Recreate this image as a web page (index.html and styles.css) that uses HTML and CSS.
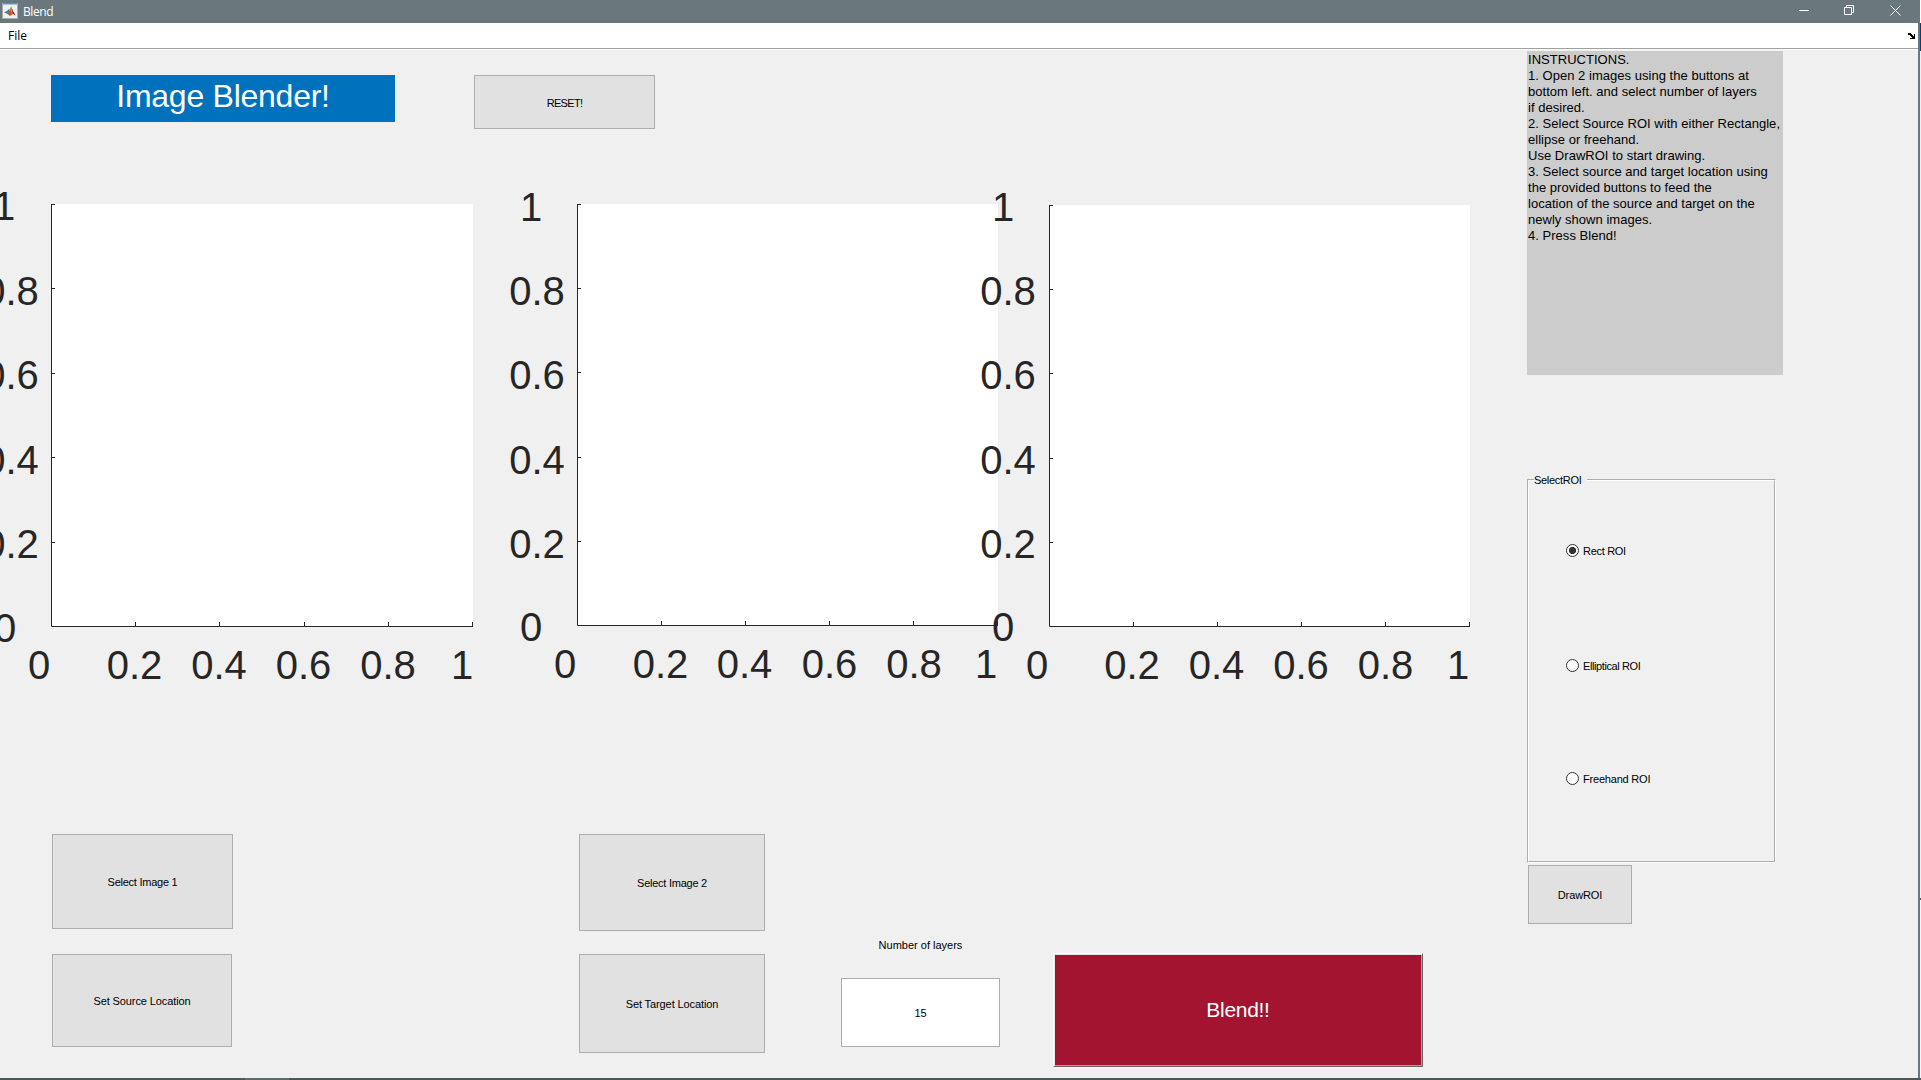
FILE: index.html
```html
<!DOCTYPE html>
<html lang="en">
<head>
<meta charset="utf-8">
<title>Blend</title>
<link rel="stylesheet" href="styles.css">
</head>
<body>
<div class="screen">
  <div class="window">
    <header class="titlebar">
      <svg class="app-icon" width="16" height="16" viewBox="0 0 16 16">
        <rect x="0.5" y="0.5" width="15" height="15" fill="#eef1f4" stroke="#a3adb1"/>
        <rect x="1" y="0" width="14" height="1.5" fill="#5b95bd"/>
        <path d="M2 9.2 5 8 7.6 5.5 7.5 9 5.5 11z" fill="#3b7ca8"/>
        <path d="M5.5 11 8 7 9 3.5 11 8 13.5 12.5 11 10.8 8 13z" fill="#c8502a"/>
        <path d="M8.6 6 9 3.5 10 7 9.4 11.5z" fill="#f08b2c"/>
        <path d="M9.3 3.8 10.8 8 13.5 12.5 11.2 10.8z" fill="#8d2318"/>
      </svg>
      <span class="window-title">Blend</span>
      <svg class="caption minimize" width="10" height="11"><path d="M0 5.5H10" stroke="#fff" fill="none"/></svg>
      <svg class="caption restore" width="10" height="11"><path d="M.5 2.5H7.5V9.5H.5ZM2.5 2.5V.5H9.5V7.5H7.5" stroke="#fff" fill="none"/></svg>
      <svg class="caption close" width="11" height="11"><path d="M.5.5 10.5 10.5M10.5.5.5 10.5" stroke="#fff" fill="none"/></svg>
    </header>
    <nav class="menubar">
      <span class="menu">File</span>
      <svg class="dock" width="7" height="6" shape-rendering="crispEdges"><path d="M0 0H3V1H4V2H5V3H6V1H7V6H2V5H4V4H3V3H2V2H0Z" fill="#000"/></svg>
    </nav>

    <main class="figure">
      <section class="workspace">
        <div class="heading">
          <h1 class="banner"><span>Image Blender!</span></h1>
          <button class="btn reset">RESET!</button>
        </div>

        <div class="plots">
          <svg class="axes axes-source" width="422" height="423">
            <rect width="422" height="423" fill="#fff"/>
            <path class="rule" d="M.5 0V422.5H422M0 .5H4M0 84.5H4M0 169.5H4M0 253.5H4M0 338.5H4M84.5 422V418M168.5 422V418M253.5 422V418M337.5 422V418M421.5 422V418"/>
            <g class="ylab"><text x="-47" y="16">1</text><text x="-40" y="101">0.8</text><text x="-40" y="185">0.6</text><text x="-40" y="270">0.4</text><text x="-40" y="354">0.2</text><text x="-46" y="438">0</text></g>
            <g class="xlab"><text x="-12" y="475">0</text><text x="83.5" y="475">0.2</text><text x="168" y="475">0.4</text><text x="252.5" y="475">0.6</text><text x="337" y="475">0.8</text><text x="411" y="475">1</text></g>
          </svg>
          <svg class="axes axes-target" width="421" height="422">
            <rect width="421" height="422" fill="#fff"/>
            <path class="rule" d="M.5 0V421.5H421M0 .5H4M0 84.5H4M0 168.5H4M0 253.5H4M0 337.5H4M84.5 421V417M168.5 421V417M252.5 421V417M336.5 421V417M420.5 421V417"/>
            <g class="ylab"><text x="-46" y="17">1</text><text x="-40" y="101">0.8</text><text x="-40" y="185">0.6</text><text x="-40" y="270">0.4</text><text x="-40" y="354">0.2</text><text x="-46" y="437">0</text></g>
            <g class="xlab"><text x="-12" y="474">0</text><text x="83.5" y="474">0.2</text><text x="167.5" y="474">0.4</text><text x="252.5" y="474">0.6</text><text x="337" y="474">0.8</text><text x="409" y="474">1</text></g>
          </svg>
          <svg class="axes axes-result" width="421" height="422">
            <rect width="421" height="422" fill="#fff"/>
            <path class="rule" d="M.5 0V421.5H421M0 .5H4M0 84.5H4M0 168.5H4M0 253.5H4M0 337.5H4M84.5 421V417M168.5 421V417M252.5 421V417M336.5 421V417M420.5 421V417"/>
            <g class="ylab"><text x="-46" y="16">1</text><text x="-41" y="100">0.8</text><text x="-41" y="184">0.6</text><text x="-41" y="269">0.4</text><text x="-41" y="353">0.2</text><text x="-46" y="436">0</text></g>
            <g class="xlab"><text x="-12" y="474">0</text><text x="83" y="474">0.2</text><text x="167.5" y="474">0.4</text><text x="252" y="474">0.6</text><text x="336.5" y="474">0.8</text><text x="409" y="474">1</text></g>
          </svg>
        </div>

        <div class="controls">
          <div class="stack source">
            <button class="btn select-1">Select Image 1</button>
            <button class="btn locate-1">Set Source Location</button>
          </div>
          <div class="stack target">
            <button class="btn select-2">Select Image 2</button>
            <button class="btn locate-2">Set Target Location</button>
          </div>
          <div class="layers">
            <span class="layers-label">Number of layers</span>
            <div class="layers-value">15</div>
          </div>
          <button class="blend">Blend!!</button>
        </div>
      </section>

      <aside class="side">
        <div class="instructions">INSTRUCTIONS.<br>1. Open 2 images using the buttons at<br>bottom left. and select number of layers<br>if desired.<br>2. Select Source ROI with either Rectangle,<br>ellipse or freehand.<br>Use DrawROI to start drawing.<br>3. Select source and target location using<br>the provided buttons to feed the<br>location of the source and target on the<br>newly shown images.<br>4. Press Blend!</div>
        <div class="roi">
          <div class="roi-frame">
            <div class="roi-title"><span>SelectROI</span></div>
            <div class="option rect"><i class="radio on"></i><span>Rect ROI</span></div>
            <div class="option elliptical"><i class="radio"></i><span>Elliptical ROI</span></div>
            <div class="option freehand"><i class="radio"></i><span>Freehand ROI</span></div>
          </div>
        </div>
        <button class="btn draw">DrawROI</button>
      </aside>
    </main>
  </div>
  <footer class="taskbar"><i class="task"></i></footer>
</div>
</body>
</html>
```
FILE: styles.css
```css
* { box-sizing: border-box; }
body {
  margin: 0;
  width: 1921px;
  height: 1080px;
  overflow: hidden;
  /* sliver of the desktop behind the window */
  background: linear-gradient(#fff 23px, #003f78 23px 51px, #f0f0f0 51px 898px, #4b5759 898px 900px, #f6f6f6 900px);
  color: #000;
  font: 11px/13px "Liberation Sans", Arial, sans-serif;
}
.screen { display: flex; flex-direction: column; height: 1080px; }
.window {
  width: 1920px;
  height: 1078px;
  border-right: 2px solid #6a787d;
  display: flex;
  flex-direction: column;
  overflow: hidden;
}

/* Caption and menu */
.titlebar {
  flex: none;
  height: 23px;
  background: #6a787d;
  display: flex;
  align-items: flex-start;
  padding: 3px 17px 0 2px;
}
.window-title {
  margin: 1px auto 0 5px;
  color: #fff;
  font: 12px/16px "Open Sans", "Noto Sans", sans-serif;
  letter-spacing: -.4px;
}
.caption { margin-top: 2px; }
.minimize { margin-right: 35px; }
.restore { margin-right: 36px; }
.menubar {
  flex: none;
  height: 27px;
  background: #fff;
  box-shadow: inset 0 -1px #fcfcfc, inset 0 -2px #a0a0a0;
  display: flex;
  justify-content: space-between;
  padding: 5px 3px 0 8px;
}
.menu { font: 12px/16px "Open Sans", "Noto Sans", sans-serif; }
.dock { margin-top: 5px; }

/* Figure */
.figure {
  flex: 1;
  background: #f0f0f0;
  display: flex;
  overflow: hidden;
}
.workspace { width: 1527px; flex: none; }
.heading {
  height: 154px;
  padding: 25px 0 0 51px;
  display: flex;
  align-items: flex-start;
  gap: 79px;
}
.banner {
  margin: 0;
  width: 344px;
  height: 47px;
  background: #0072bd;
  color: #fff;
  font-weight: 400;
  font-size: 32px;
  line-height: 42px;
  letter-spacing: -.25px;
  text-align: center;
}
.btn {
  display: block;
  border: 1px solid #adadad;
  border-radius: 0;
  background: #e1e1e1;
  color: #000;
  font: inherit;
  letter-spacing: -.1px;
  padding: 2px 0 0;
}
.reset { width: 181px; height: 54px; letter-spacing: -.7px; }

.plots { display: flex; height: 630px; padding-left: 51px; }
.axes { overflow: visible; flex: none; }
.axes-target { margin-left: 104px; }
.axes-result { margin: 1px 0 0 51px; }
.axes text { font-size: 40px; fill: #262626; text-anchor: middle; }
.rule { fill: none; stroke: #262626; stroke-width: 1; }

.controls { display: flex; padding-left: 52px; align-items: flex-start; }
.stack { display: flex; flex-direction: column; }
.source { width: 527px; gap: 25px; }
.target { width: 262px; gap: 23px; }
.select-1 { width: 181px; height: 95px; letter-spacing: -.25px; }
.locate-1 { width: 180px; height: 93px; }
.select-2 { width: 186px; height: 97px; letter-spacing: -.25px; }
.locate-2 { width: 186px; height: 99px; }
.layers {
  width: 159px;
  margin: 105px 53px 0 0;
  display: flex;
  flex-direction: column;
  gap: 26px;
  text-align: center;
}
.layers-value {
  height: 69px;
  background: #fff;
  border: 1px solid #abadb3;
  line-height: 69px;
}
.blend {
  width: 370px;
  height: 114px;
  margin-top: 119px;
  padding: 0;
  border: 1px solid;
  border-color: #fff #696969 #696969 #fff;
  box-shadow: inset 1px 1px #e3e3e3, inset -1px -1px #a0a0a0;
  background: #a2142f;
  color: #fff;
  font: 21px/24px "Liberation Sans", Arial, sans-serif;
  letter-spacing: -.3px;
}

/* Right column */
.side { padding-top: 1px; width: 256px; flex: none; }
.instructions {
  height: 324px;
  background: #ccc;
  padding: 1px 0 0 1px;
  font-size: 13px;
  line-height: 16px;
  letter-spacing: .03px;
  white-space: nowrap;
}
.roi {
  width: 249px;
  height: 384px;
  margin-top: 104px;
  border: 1px solid;
  border-color: #adadad #fff #fff #adadad;
}
.roi-frame {
  height: 100%;
  border: 1px solid;
  border-color: #fff #adadad #adadad #fff;
  padding-left: 37px;
  display: flex;
  flex-direction: column;
}
.roi-title { margin: -7px 0 57px -32px; height: 13px; letter-spacing: -.3px; }
.roi-title span { background: #f0f0f0; padding: 0 6px 0 0; display: inline-block; }
.option { display: flex; height: 13px; gap: 4px; }
.option span { padding-top: 1px; }
.rect { margin-bottom: 102px; letter-spacing: -.3px; }
.elliptical { margin-bottom: 100px; letter-spacing: -.4px; }
.freehand { letter-spacing: -.2px; }
.radio {
  width: 13px;
  height: 13px;
  border: 1px solid #333;
  border-radius: 50%;
  background: #fff;
}
.radio.on { background: radial-gradient(circle, #333 3.2px, #fff 4px); }
.draw { width: 104px; height: 59px; margin: 2px 0 0 1px; }

.taskbar { height: 2px; background: #4b5759; padding-left: 245px; }
.task { display: block; width: 44px; height: 2px; background: #5b6c6c; }
```
